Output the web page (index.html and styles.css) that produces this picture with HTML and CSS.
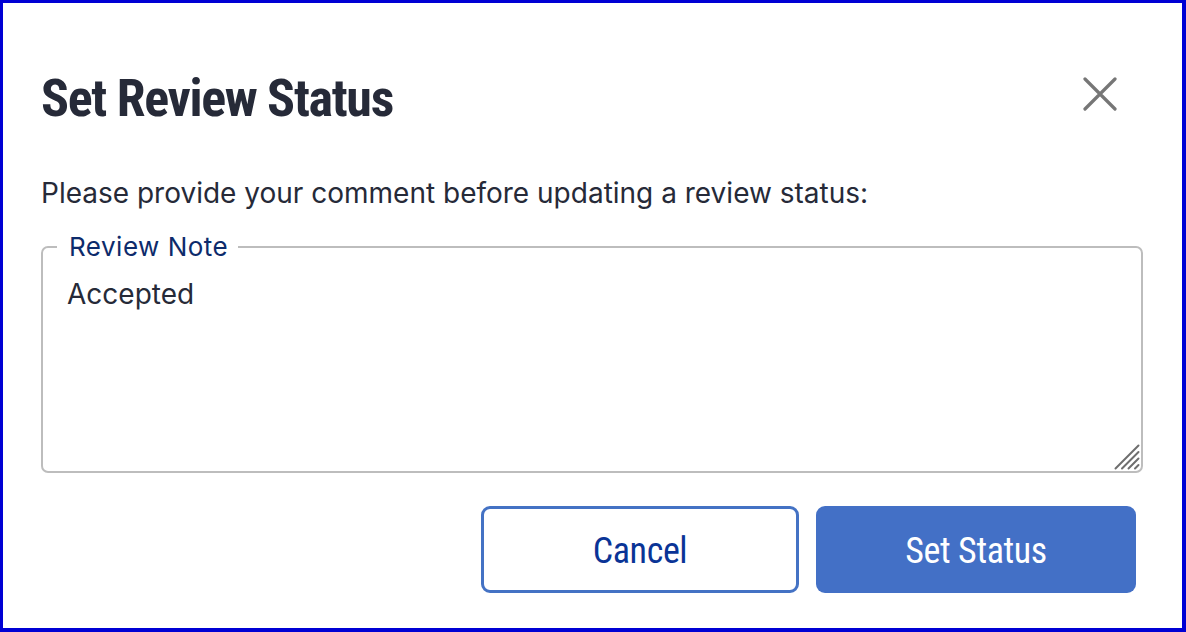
FILE: index.html
```html
<!DOCTYPE html>
<html>
<head>
<meta charset="utf-8">
<link rel="stylesheet" href="styles.css">
</head>
<body>
<div class="frame">
  <div class="dialog">
    <div class="header">
      <h1 class="title">Set Review Status</h1>
      <button class="close" aria-label="Close">
        <svg width="34" height="34" viewBox="0 0 34 34"><path d="M2 2 L32 32 M32 2 L2 32" stroke="#767676" stroke-width="3.2" stroke-linecap="round"/></svg>
      </button>
    </div>
    <p class="prompt">Please provide your comment before updating a review status:</p>
    <fieldset class="note">
      <legend class="note-label">Review Note</legend>
      <div class="note-text">Accepted</div>
      <svg class="grip" width="26" height="26" viewBox="0 0 26 26"><path d="M24.5 1.5 L1.5 24.5 M24.5 8 L8 24.5 M24.5 14.5 L14.5 24.5 M24.5 21 L21 24.5" stroke="#6e6e6e" stroke-width="2" stroke-linecap="round"/></svg>
    </fieldset>
    <div class="actions">
      <button class="btn btn-outline">Cancel</button>
      <button class="btn btn-primary">Set Status</button>
    </div>
  </div>
</div>
</body>
</html>
```
FILE: styles.css
```css
html, body { margin: 0; padding: 0; }
body { background: #fff; }
.frame {
  width: 1186px; height: 632px; box-sizing: border-box;
  border-style: solid; border-color: #0000d4;
  border-width: 3px 4px 4px 3px;
  background: #fff;
  overflow: hidden;
}
.dialog { padding: 0 39px 0 38px; }
.header {
  display: flex; justify-content: space-between; align-items: flex-start;
}
.title {
  margin: 66px 0 0 0;
  font-family: "Roboto Condensed", sans-serif;
  font-weight: 700; font-size: 52px; line-height: 60px;
  letter-spacing: -1.3px; color: #262a38;
}
.close {
  border: 0; background: none; padding: 0; cursor: pointer;
  margin: 74px 26px 0 0; width: 34px; height: 34px; display: block;
}
.close svg { display: block; }
.prompt {
  margin: 47px 0 0 0;
  font-family: Inter, sans-serif; font-size: 28px; line-height: 34px; color: #262a38;
}
.note {
  position: relative;
  margin: 21px 0 0 0; padding: 15px 24px 0; min-width: 0;
  border: 2px solid #bdbdbd; border-radius: 7px;
}
.note-label {
  font-family: Inter, sans-serif; font-size: 26px; letter-spacing: 0.5px; color: #0d2b6b;
  padding: 0 10px 0 12px; margin-left: -10px;
}
.note-text {
  font-family: Inter, sans-serif; font-size: 28px; line-height: 34px; color: #262a38;
  height: 194px;
}
.grip { position: absolute; right: 1px; bottom: 1px; }
.actions { display: flex; justify-content: flex-end; gap: 17px; margin-top: 33px; padding-right: 7px; }
.btn {
  height: 87px; border-radius: 9px; box-sizing: border-box;
  font-family: "Roboto Condensed", sans-serif;
  font-size: 36px; letter-spacing: -0.4px; font-weight: 400; cursor: pointer;
  padding-top: 4px;
}
.btn-outline { width: 318px; background: #fff; border: 3px solid #4472c4; color: #0a3496; }
.btn-primary { width: 320px; background: #4370c6; border: 0; color: #fff; }
```
